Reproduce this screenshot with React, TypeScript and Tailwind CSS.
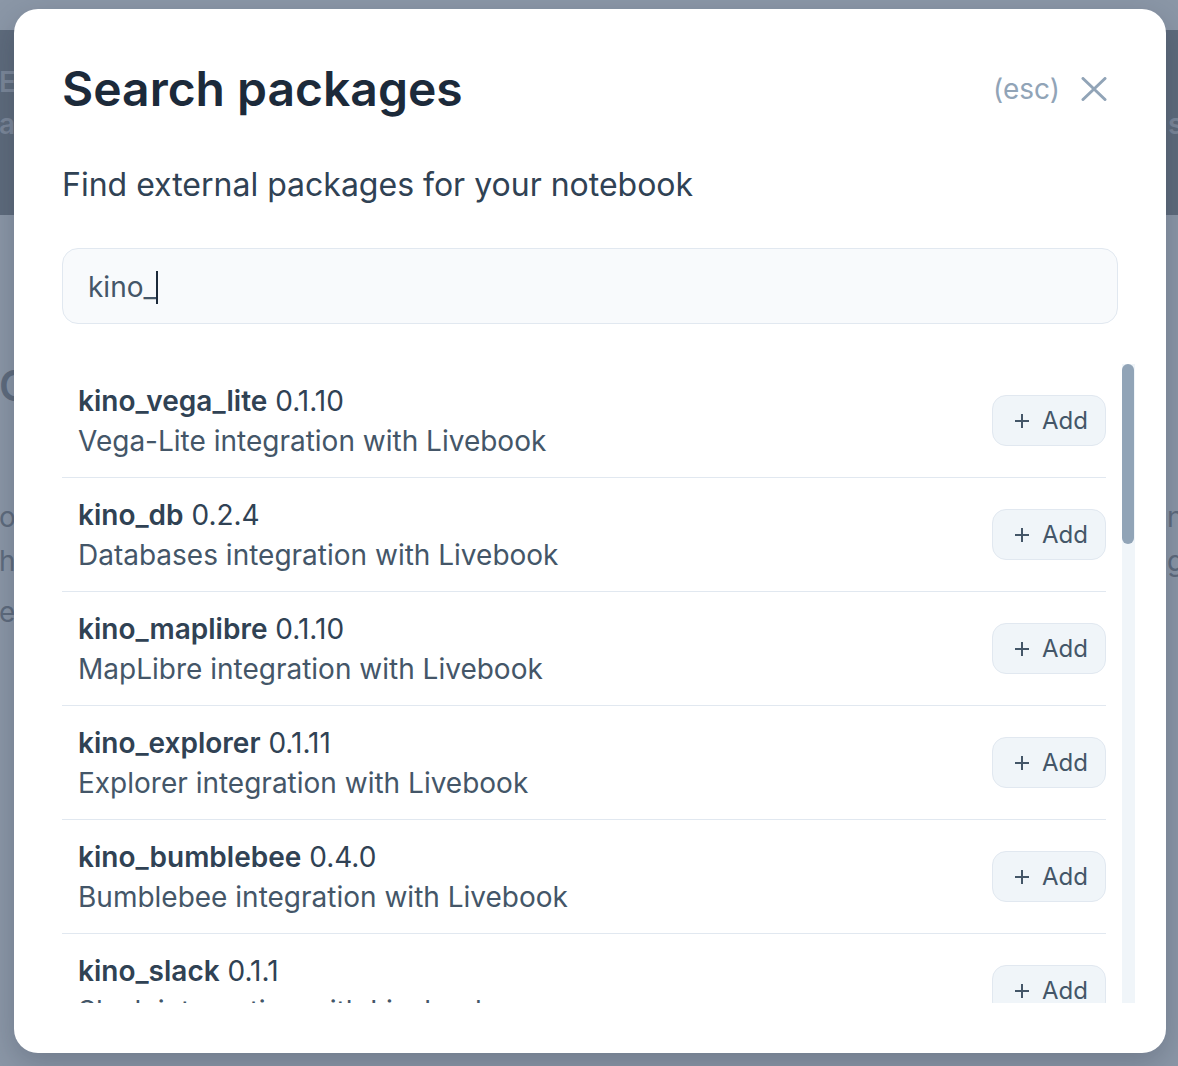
const packages = [
  { name: 'kino_vega_lite', version: '0.1.10', description: 'Vega-Lite integration with Livebook' },
  { name: 'kino_db', version: '0.2.4', description: 'Databases integration with Livebook' },
  { name: 'kino_maplibre', version: '0.1.10', description: 'MapLibre integration with Livebook' },
  { name: 'kino_explorer', version: '0.1.11', description: 'Explorer integration with Livebook' },
  { name: 'kino_bumblebee', version: '0.4.0', description: 'Bumblebee integration with Livebook' },
  { name: 'kino_slack', version: '0.1.1', description: 'Slack integration with Livebook' },
  { name: 'kino_benchee', version: '0.1.0', description: 'Benchee integration with Livebook' },
];

function PlusIcon() {
  return (
    <svg width="14" height="14" viewBox="0 0 14 14" fill="none" stroke="currentColor" strokeWidth="2">
      <path d="M7 0v14M0 7h14" />
    </svg>
  );
}

function CloseIcon() {
  return (
    <svg width="26" height="24" viewBox="0 0 26 24" fill="none" stroke="currentColor" strokeWidth="3" strokeLinecap="round">
      <path d="M2 1.5l22 21M24 1.5l-22 21" />
    </svg>
  );
}

function PackageRow({ name, version, description }: { name: string; version: string; description: string }) {
  return (
    <div className="h-[114px] shrink-0 flex items-center justify-between border-b border-[#e1e8f0] pl-4">
      <div className="flex flex-col text-[28px] leading-[40px] whitespace-nowrap">
        <div className="text-[#304254]">
          <span className="font-semibold">{name}</span> {version}
        </div>
        <div className="text-[#445668]">{description}</div>
      </div>
      <button className="h-[51px] flex items-center gap-[13px] pt-px pl-[22px] pr-[17px] rounded-[14px] border border-[#e1e8f0] bg-[#f0f5f9] text-[24px] text-[#445668]">
        <PlusIcon />
        <span>Add</span>
      </button>
    </div>
  );
}

function BackgroundPage() {
  return (
    <div className="flex flex-col pt-[30px] text-[28px] leading-[40px]">
      <div className="h-[185px] bg-[#5e6b7c] flex flex-col pt-[32px] text-[#7b8799] font-semibold">
        <div className="flex justify-between">
          <span className="w-[14px] overflow-hidden whitespace-nowrap -indent-px">Ex</span>
          <span className="w-[12px]" />
        </div>
        <div className="flex justify-between mt-[2px]">
          <span className="w-[14px] overflow-hidden whitespace-nowrap -indent-px">a</span>
          <span className="w-[12px] overflow-hidden whitespace-nowrap pl-[2px]">s</span>
        </div>
      </div>
      <div className="flex flex-col text-[#5e6b7d]">
        <div className="mt-[147px] text-[42px] leading-[48px] font-semibold">
          <span className="block w-[14px] overflow-hidden whitespace-nowrap -indent-px">C</span>
        </div>
        <div className="flex justify-between mt-[87px]">
          <span className="w-[14px] overflow-hidden whitespace-nowrap -indent-px">o</span>
          <span className="w-[12px] overflow-hidden whitespace-nowrap pl-[1px]">n</span>
        </div>
        <div className="flex justify-between mt-[4px]">
          <span className="w-[14px] overflow-hidden whitespace-nowrap -indent-px">h</span>
          <span className="w-[12px] overflow-hidden whitespace-nowrap pl-[1px]">g</span>
        </div>
        <div className="flex justify-between mt-[11px]">
          <span className="w-[14px] overflow-hidden whitespace-nowrap -indent-px">er</span>
          <span className="w-[12px]" />
        </div>
      </div>
    </div>
  );
}

export default function App() {
  return (
    <div className="relative w-[1178px] h-[1066px] overflow-hidden bg-[#8b97a7] font-[Inter,sans-serif]">
      <BackgroundPage />

      <div className="absolute left-[14px] top-[9px] w-[1152px] h-[1044px] bg-white rounded-[24px] shadow-[0_10px_30px_rgba(30,41,59,0.25)] flex flex-col px-12 pt-[52px] pb-[50px]">
        <div className="h-[56px] flex items-center justify-between">
          <h1 className="text-[48px] leading-[56px] font-semibold text-[#1c2a3a]">Search packages</h1>
          <div className="flex items-center gap-[21px] mr-[11px] text-[#91a4b7]">
            <span className="text-[28px] ml-[3px]">(esc)</span>
            <CloseIcon />
          </div>
        </div>

        <p className="mt-[48px] text-[32px] leading-[40px] text-[#304254]">Find external packages for your notebook</p>

        <div className="mt-[43px] h-[76px] shrink-0 flex items-center pt-[2px] px-[25px] rounded-[16px] border border-[#e1e8f0] bg-[#f8fafc] text-[28px] text-[#445668]">
          <span>kino_</span>
          <span className="w-[2px] h-[33px] bg-[#1c2a3a]" />
        </div>

        <div className="mt-[40px] flex-1 min-h-0 flex gap-4 -mr-[17px] overflow-hidden">
          <div className="flex-1 flex flex-col overflow-hidden">
            {packages.map((pkg) => (
              <PackageRow key={pkg.name} {...pkg} />
            ))}
          </div>
          <div className="w-[13px] bg-[#f0f5f9]">
            <div className="h-[180px] w-[12px] rounded-full bg-[#91a4b7]" />
          </div>
        </div>
      </div>
    </div>
  );
}
